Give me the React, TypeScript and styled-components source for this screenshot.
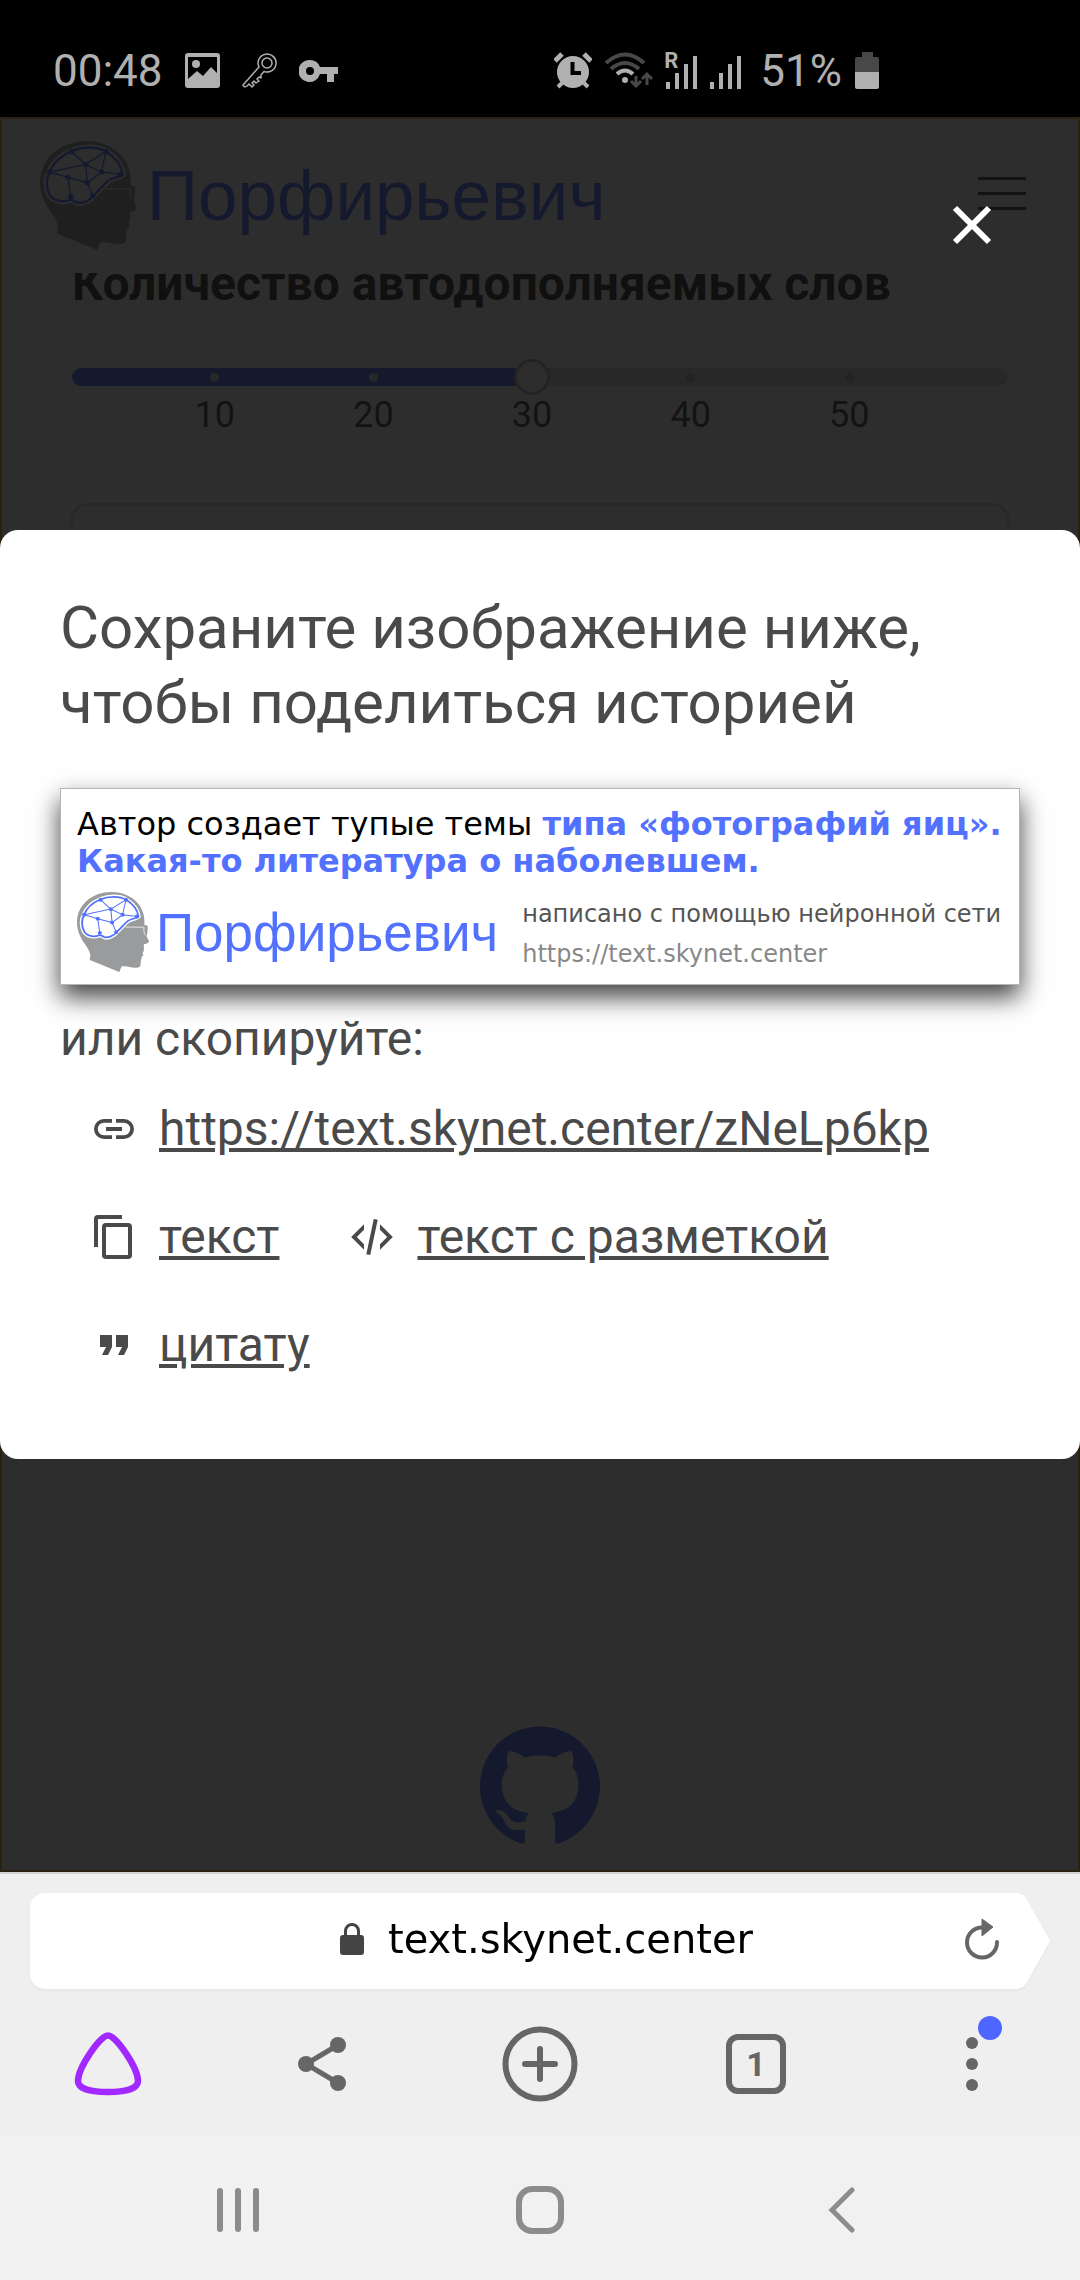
import React, { useState } from "react";
import styled, { createGlobalStyle } from "styled-components";

const roboto = `Roboto, "Noto Sans", sans-serif`;
const dejavu = `"DejaVu Sans", Verdana, sans-serif`;
const arial = `"Liberation Sans", Arial, sans-serif`;
const blue = "#5371ff";
const ink = "#4a4a4a";

const GlobalStyle = createGlobalStyle`
  *, *::before, *::after { box-sizing: border-box; }
  body { margin: 0; background: #f1f1f1; font-family: ${roboto}; color: ${ink}; }
  button { margin: 0; padding: 0; border: 0; background: none; color: inherit; font: inherit; cursor: pointer; }
  svg { display: block; flex: none; }
  h1, h2, p { margin: 0; }
`;

const Screen = styled.div`
  display: flex;
  flex-direction: column;
  min-height: 100vh;
`;

/* ---------- status bar ---------- */

const StatusBar = styled.header`
  display: flex;
  align-items: center;
  justify-content: space-between;
  height: 117px;
  padding: 24px 201px 0 53px;
  background: #000;
  color: #b0b0b0;
  font-size: 44px;
  line-height: 52px;
`;

const StatusGroup = styled.div<{ $gap: number }>`
  display: flex;
  align-items: center;
  gap: ${(p) => p.$gap}px;
`;

const Battery = styled(StatusGroup)`
  padding-left: 6px;
`;

/* ---------- site ---------- */

const Stage = styled.main`
  display: grid;
  flex: 1;
  grid-template: minmax(0, 1fr) / minmax(0, 1fr);
`;

const Page = styled.div`
  grid-area: 1 / 1;
  display: flex;
  flex-direction: column;
  border: 2px solid #eea74a;
  background: #fff;
`;

const SiteHeader = styled.div`
  display: flex;
  justify-content: space-between;
  align-items: flex-start;
  height: 154px;
  padding: 22px 52px 0 38px;
`;

const Brand = styled.span<{ $size: number; $gap: number }>`
  display: flex;
  align-items: center;
  gap: ${(p) => p.$gap}px;
  color: ${blue};
  font-family: ${arial};
  font-size: ${(p) => p.$size}px;
  line-height: 1;
`;

const Burger = styled.button`
  display: flex;
  flex-direction: column;
  gap: 12px;
  width: 48px;
  margin-top: 36px;
`;

const BurgerLine = styled.span`
  height: 3px;
  background: ${ink};
`;

const Settings = styled.section`
  display: flex;
  flex-direction: column;
  padding: 0 70px;
`;

const TitleWindow = styled.div`
  display: flex;
  flex-direction: column;
  justify-content: flex-end;
  height: 47px;
  overflow: hidden;
`;

const SectionTitle = styled.h2`
  color: #363636;
  font-size: 48px;
  font-weight: 700;
  line-height: 72px;
  white-space: nowrap;
`;

const SliderBox = styled.div`
  display: grid;
  grid-template-columns: minmax(0, 1fr);
  align-items: center;
  margin-top: 39px;
`;

const Track = styled.div<{ $filled: number }>`
  grid-area: 1 / 1;
  display: grid;
  grid-template-columns: 4fr repeat(5, 10fr) 5fr;
  align-items: center;
  height: 18px;
  border-radius: 9px;
  background: linear-gradient(to right, ${blue} ${(p) => p.$filled}%, #dbdbdb ${(p) => p.$filled}%);
`;

const Tick = styled.span<{ $column: number; $passed: boolean }>`
  grid-column: ${(p) => p.$column};
  justify-self: center;
  width: 9px;
  height: 9px;
  border-radius: 50%;
  background: ${(p) => (p.$passed ? "#dbdbdb" : "#b5b5b5")};
`;

const Range = styled.input`
  grid-area: 1 / 1;
  appearance: none;
  height: 36px;
  margin: 0 -18px;
  background: transparent;
  &::-webkit-slider-runnable-track { height: 36px; background: transparent; }
  &::-webkit-slider-thumb {
    appearance: none;
    width: 36px;
    height: 36px;
    border: 3px solid #b5b5b5;
    border-radius: 50%;
    background: #fff;
  }
`;

const Scale = styled.div`
  display: grid;
  grid-template-columns: 4fr repeat(5, 10fr) 5fr;
  margin-top: 2px;
  font-size: 36px;
  line-height: 36px;
`;

const ScaleLabel = styled.span<{ $column: number }>`
  grid-column: ${(p) => p.$column};
  text-align: center;
`;

const Story = styled.textarea`
  height: 600px;
  margin: 70px -2px 0;
  padding: 30px;
  border: 3px solid #dbdbdb;
  border-radius: 18px;
  background: #fff;
  resize: none;
`;

const SiteFooter = styled.footer`
  display: flex;
  justify-content: center;
  margin-top: auto;
  padding-bottom: 25px;
  a { color: ${blue}; }
`;

/* ---------- modal ---------- */

const Overlay = styled.div`
  grid-area: 1 / 1;
  z-index: 1;
  display: grid;
  grid-template: minmax(0, 1fr) / minmax(0, 1fr);
  background: rgba(10, 10, 10, 0.86);
`;

const CloseButton = styled.button`
  grid-area: 1 / 1;
  align-self: start;
  justify-self: end;
  display: grid;
  place-items: center;
  width: 96px;
  height: 96px;
  margin: 60px;
  color: #fff;
`;

const Dialog = styled.section`
  grid-area: 1 / 1;
  align-self: center;
  padding: 60px;
  border-radius: 18px;
  background: #fff;
`;

const DialogTitle = styled.h1`
  font-size: 60px;
  font-weight: 400;
  line-height: 75px;
`;

const Card = styled.figure`
  margin: 48px 0 18px;
  padding: 17px 16px 10px;
  border: 1px solid #b5b5b5;
  background: #fff;
  box-shadow: 0 12px 24px rgba(0, 0, 0, 0.75);
  font-family: ${dejavu};
`;

const Quote = styled.p`
  color: #000;
  font-size: 32px;
  line-height: 37px;
  b { color: ${blue}; }
`;

const CardFooter = styled.figcaption`
  display: flex;
  align-items: center;
  gap: 24px;
  margin-top: 10px;
`;

const Credits = styled.div`
  display: flex;
  flex-direction: column;
  padding-top: 4px;
  font-size: 24px;
  line-height: 40px;
  color: #555;
  white-space: nowrap;
`;

const CreditsUrl = styled.span`
  color: #888;
`;

const Lead = styled.p`
  font-size: 48px;
  line-height: 72px;
`;

const Actions = styled.div`
  display: flex;
  flex-wrap: wrap;
  column-gap: 69px;
  padding: 0 30px;
`;

const LineBreak = styled.span`
  flex-basis: 100%;
`;

const Action = styled.button`
  display: flex;
  align-items: center;
  gap: 21px;
  height: 108px;
  font-size: 48px;
  line-height: 72px;
  span { text-decoration: underline; }
`;

/* ---------- browser chrome ---------- */

const BrowserBar = styled.div`
  display: flex;
  flex-direction: column;
  gap: 3px;
  padding: 19px 30px 0;
  border-top: 2px solid #d6d4d2;
  background: #efefef;
`;

const AddressBar = styled.div`
  display: flex;
  height: 96px;
  filter: drop-shadow(0 2px 1px rgba(0, 0, 0, 0.03));
`;

const AddressBody = styled.div`
  display: grid;
  grid-template-columns: minmax(0, 1fr);
  flex: 1;
  align-items: center;
  border-radius: 15px 0 0 15px;
  background: #fff;
`;

const Address = styled.button`
  grid-area: 1 / 1;
  display: flex;
  justify-content: center;
  align-items: center;
  gap: 24px;
  height: 96px;
  padding: 0 0 4px 50px;
  color: #000;
  font-family: ${dejavu};
  font-size: 40px;
`;

const Reload = styled.button`
  grid-area: 1 / 1;
  justify-self: end;
  margin-right: 10px;
  color: #666;
`;

const Toolbar = styled.nav`
  display: grid;
  grid-template-columns: repeat(5, 1fr);
  height: 144px;
  margin: 0 -30px;
  color: #666;
`;

const Tool = styled.button`
  display: grid;
  place-items: center;
`;

const TabCount = styled.span`
  display: grid;
  place-items: center;
  width: 60px;
  height: 60px;
  border: 6px solid #666;
  border-radius: 12px;
  font-size: 34px;
  font-weight: 700;
  line-height: 34px;
`;

const SystemNav = styled.nav`
  display: grid;
  grid-template-columns: repeat(3, 1fr);
  height: 144px;
  padding: 4px 8% 0;
  background: #f1f1f1;
  color: #8c8c8c;
`;

/* ---------- drawings ---------- */

const nodes: [number, number][] = [
  [208, 454], [307, 454], [248, 492], [144, 515], [197, 531],
  [294, 515], [350, 522], [253, 547], [205, 589], [269, 586],
];

const brain =
  "M144 515C155 482 182 464 208 452C240 438 282 438 307 453C336 472 352 496 356 522C350 530 330 530 315 540C300 552 288 570 270 586C262 600 235 612 222 606C214 603 213 598 204 598C190 608 155 603 145 585C132 560 134 535 144 515Z";

function Head({ width, height }: { width: number; height: number }) {
  return (
    <svg width={width} height={height} viewBox="116 422 281 327" preserveAspectRatio="none" aria-hidden="true">
      <path
        fill="#999b9d"
        d="M250 422C325 422 379 475 379 540V558L386 557L388 560H392V573L388 605L397 622Q396 632 377 636V662L372 671L375 681L370 685C366 695 364 708 364 722Q361 732 342 732C325 731 305 723 290 727L281 749L166 700L168 678C162 650 144 637 130 606C120 585 116 566 116 543C118 470 180 422 250 422Z"
      />
      <path d={brain} fill="#fff" stroke="#fff" strokeWidth="18" strokeLinejoin="round" />
      <path d={brain} fill="none" stroke={blue} strokeWidth="7" />
      <path
        fill="none"
        stroke={blue}
        strokeWidth="4"
        d="M208 454L248 492L307 454L294 515L350 522M144 515L248 492L294 515L253 547L269 586M144 515L197 531L253 547L248 492M197 531L205 589"
      />
      {nodes.map(([x, y]) => (
        <circle key={`${x}-${y}`} cx={x} cy={y} r="8" fill={blue} />
      ))}
      <path fill="none" stroke="#fff" strokeWidth="3" d="M305 565L377 566M377 566V580Q378 595 384 600" />
    </svg>
  );
}

const icons = {
  link: "M3.9 12c0-1.71 1.39-3.1 3.1-3.1h4V7H7a5 5 0 0 0 0 10h4v-1.9H7c-1.71 0-3.1-1.39-3.1-3.1M8 13h8v-2H8v2m9-6h-4v1.9h4a3.1 3.1 0 0 1 0 6.2h-4V17h4a5 5 0 0 0 0-10Z",
  copy: "M19 21H8V7h11m0-2H8a2 2 0 0 0-2 2v14a2 2 0 0 0 2 2h11a2 2 0 0 0 2-2V7a2 2 0 0 0-2-2m-3-4H4a2 2 0 0 0-2 2v14h2V3h12V1Z",
  markup: "M12.89 3l1.96.4L11.11 21l-1.96-.4L12.89 3m6.7 9L16 8.41V5.58L22.42 12 16 18.41v-2.83L19.59 12M1.58 12 8 5.58v2.83L4.41 12 8 15.58v2.83L1.58 12Z",
  quote: "M14 17h3l2-4V7h-6v6h3M6 17h3l2-4V7H5v6h3l-2 4Z",
};

function ActionIcon({ name }: { name: keyof typeof icons }) {
  return (
    <svg width="48" height="48" viewBox="0 0 24 24" fill="currentColor" aria-hidden="true">
      <path d={icons[name]} />
    </svg>
  );
}

const PictureIcon = () => (
  <svg width="35" height="35" viewBox="0 0 35 35" fill="currentColor">
    <path fillRule="evenodd" d="M3 0h29a3 3 0 0 1 3 3v29a3 3 0 0 1-3 3H3a3 3 0 0 1-3-3V3a3 3 0 0 1 3-3Zm0 4v22l9-8 6 5 8-9 6 6V4Z" />
    <circle cx="11" cy="11" r="4" />
  </svg>
);

const KeyOutlineIcon = () => (
  <svg width="35" height="35" viewBox="0 0 35 35" fill="none" stroke="currentColor" strokeWidth="1.5" strokeLinejoin="round">
    <circle cx="25" cy="10" r="5" />
    <path d="M17 14a9 9 0 1 1 5 4.500L19 22v3l-2-1-2 2 2 2-3 2-2-2-2 2 2 2-2 2-3-3-2 2Q2 35 1 32Z" />
  </svg>
);

const KeyIcon = () => (
  <svg width="39" height="22" viewBox="0 0 39 22" fill="currentColor">
    <path fillRule="evenodd" d="M11 0a11 11 0 0 1 10 7h18v7h-4v8h-7v-8h-7A11 11 0 1 1 11 0Zm0 7a4 4 0 1 0 0 8 4 4 0 0 0 0-8Z" />
  </svg>
);

const AlarmIcon = () => (
  <svg width="38" height="37" viewBox="0 0 38 37">
    <path d="M1 9 8 2M37 9 30 2" stroke="currentColor" strokeWidth="5" />
    <path d="M8 31 4 35M30 31l4 4" stroke="currentColor" strokeWidth="4" />
    <circle cx="19" cy="20" r="16" fill="currentColor" />
    <path d="M18.500 10v11H27" fill="none" stroke="#000" strokeWidth="4" />
  </svg>
);

const WifiIcon = () => (
  <svg width="48" height="37" viewBox="0 0 48 37" fill="none" stroke="currentColor" strokeWidth="4">
    <g stroke="#484848">
      <path d="M1 11Q20-6 39 11M6 17Q20 5 34 17" />
      <path d="M31 24v9m-5-4 5 5 5-5M42 33v-9m-5 3 5-5 5 5" strokeWidth="3" />
    </g>
    <path d="M12 22Q20 15 28 22" />
    <circle cx="20" cy="28" r="3" fill="currentColor" stroke="none" />
  </svg>
);

const SignalGroup = styled.span`
  display: grid;
  align-items: end;
`;

const SignalBars = styled.svg`
  grid-area: 1 / 1;
`;

const Roaming = styled.span`
  grid-area: 1 / 1;
  align-self: start;
  margin-left: -2px;
  font-size: 22px;
  font-weight: 700;
  line-height: 18px;
`;

function Signal({ roaming }: { roaming?: boolean }) {
  return (
    <SignalGroup>
      <SignalBars width="31" height="37" viewBox="0 0 31 37">
        <path d="M2 30v7M11 21v16M20 12v25M29 4v33" stroke="currentColor" strokeWidth="4" />
      </SignalBars>
      {roaming && <Roaming>R</Roaming>}
    </SignalGroup>
  );
}

const BatteryIcon = () => (
  <svg width="24" height="37" viewBox="0 0 24 37">
    <path fill="#484848" d="M7 0h11v5h4a2 2 0 0 1 2 2v14H0V7a2 2 0 0 1 2-2h5Z" />
    <path fill="currentColor" d="M0 20h24v15a2 2 0 0 1-2 2H2a2 2 0 0 1-2-2Z" />
  </svg>
);

const marks = [10, 20, 30, 40, 50];
const rangeMin = 1;
const rangeMax = 60;

export default function App() {
  const [words, setWords] = useState(30);
  const filled = ((words - rangeMin) / (rangeMax - rangeMin)) * 100;

  return (
    <Screen>
      <GlobalStyle />
      <StatusBar>
        <StatusGroup $gap={22}>
          <span>00:48</span>
          <PictureIcon />
          <KeyOutlineIcon />
          <KeyIcon />
        </StatusGroup>
        <StatusGroup $gap={13}>
          <AlarmIcon />
          <WifiIcon />
          <Signal roaming />
          <Signal />
          <Battery $gap={13}>
            <span>51%</span>
            <BatteryIcon />
          </Battery>
        </StatusGroup>
      </StatusBar>

      <Stage>
        <Page>
          <SiteHeader>
            <Brand $size={71} $gap={10}>
              <Head width={97} height={109} />
              Порфирьевич
            </Brand>
            <Burger aria-label="Меню">
              <BurgerLine />
              <BurgerLine />
              <BurgerLine />
            </Burger>
          </SiteHeader>
          <Settings>
            <TitleWindow>
              <SectionTitle id="words-title">Количество автодополняемых слов</SectionTitle>
            </TitleWindow>
            <SliderBox>
              <Track $filled={filled}>
                {marks.map((mark, i) => (
                  <Tick key={mark} $column={i + 2} $passed={mark <= words} />
                ))}
              </Track>
              <Range
                type="range"
                aria-labelledby="words-title"
                min={rangeMin}
                max={rangeMax}
                value={words}
                onChange={(e) => setWords(Number(e.target.value))}
              />
            </SliderBox>
            <Scale>
              {marks.map((mark, i) => (
                <ScaleLabel key={mark} $column={i + 2}>{mark}</ScaleLabel>
              ))}
            </Scale>
            <Story aria-label="История" />
          </Settings>
          <SiteFooter>
            <a href="#github" aria-label="GitHub">
              <svg width="120" height="120" viewBox="0 0 16 16" fill="currentColor">
                <path d="M8 .2c-4.420 0-8 3.580-8 8 0 3.540 2.290 6.530 5.470 7.590.4.070.55-.17.55-.38 0-.19-.01-.82-.01-1.490-2.010.37-2.530-.49-2.690-.94-.09-.23-.48-.94-.82-1.130-.28-.15-.68-.52-.01-.53.63-.01 1.080.58 1.230.82.72 1.210 1.870.87 2.330.66.07-.52.28-.87.51-1.070-1.780-.2-3.640-.89-3.640-3.950 0-.87.31-1.590.82-2.150-.08-.2-.36-1.020.08-2.120 0 0 .67-.21 2.200.82.64-.18 1.320-.27 2-.27s1.360.09 2 .27c1.530-1.040 2.200-.82 2.200-.82.44 1.100.16 1.920.08 2.120.51.56.82 1.270.82 2.150 0 3.070-1.870 3.750-3.650 3.950.29.25.54.73.54 1.480 0 1.070-.01 1.930-.01 2.200 0 .21.15.46.55.38A8.010 8.010 0 0 0 16 8.200c0-4.420-3.580-8-8-8Z" />
              </svg>
            </a>
          </SiteFooter>
        </Page>

        <Overlay>
          <CloseButton aria-label="Закрыть">
            <svg width="48" height="48" viewBox="0 0 48 48" stroke="currentColor" strokeWidth="6">
              <path d="M7 7 41 41M41 7 7 41" />
            </svg>
          </CloseButton>
          <Dialog role="dialog" aria-labelledby="share-title">
            <DialogTitle id="share-title">Сохраните изображение ниже, чтобы поделиться историей</DialogTitle>
            <Card>
              <Quote>
                Автор создает тупые темы <b>типа «фотографий яиц». Какая-то литература о наболевшем.</b>
              </Quote>
              <CardFooter>
                <Brand $size={53} $gap={7}>
                  <Head width={72} height={80} />
                  Порфирьевич
                </Brand>
                <Credits>
                  <span>написано с помощью нейронной сети</span>
                  <CreditsUrl>https://text.skynet.center</CreditsUrl>
                </Credits>
              </CardFooter>
            </Card>
            <Lead>или скопируйте:</Lead>
            <Actions>
              <Action>
                <ActionIcon name="link" />
                <span>https://text.skynet.center/zNeLp6kp</span>
              </Action>
              <LineBreak />
              <Action>
                <ActionIcon name="copy" />
                <span>текст</span>
              </Action>
              <Action>
                <ActionIcon name="markup" />
                <span>текст с разметкой</span>
              </Action>
              <LineBreak />
              <Action>
                <ActionIcon name="quote" />
                <span>цитату</span>
              </Action>
            </Actions>
          </Dialog>
        </Overlay>
      </Stage>

      <BrowserBar>
        <AddressBar>
          <AddressBody>
            <Address>
              <svg width="24" height="32" viewBox="0 0 24 32">
                <path d="M5.500 14V8a6.500 6.500 0 0 1 13 0v6" fill="none" stroke="#444" strokeWidth="3" />
                <rect y="12" width="24" height="20" rx="3" fill="#444" />
              </svg>
              text.skynet.center
            </Address>
            <Reload aria-label="Обновить">
              <svg width="42" height="50" viewBox="0 0 42 50">
                <path d="M21 11.500A15 15 0 1 0 36 26" fill="none" stroke="currentColor" strokeWidth="4" strokeLinecap="round" />
                <path d="M21 3 32 11 21 20Z" fill="currentColor" stroke="currentColor" strokeWidth="1" strokeLinejoin="round" />
              </svg>
            </Reload>
          </AddressBody>
          <svg width="37" height="96" viewBox="0 0 37 96">
            <path fill="#fff" d="M0 0H3C8 0 12 3 14 7L37 48L14 89C12 93 8 96 3 96H0Z" />
          </svg>
        </AddressBar>
        <Toolbar>
          <Tool aria-label="Алиса">
            <svg width="68" height="66" viewBox="0 0 68 66">
              <path d="M34 4.500C42 4.500 64 37 64 50C64 58 50 61 34 61S4 58 4 50C4 37 26 4.500 34 4.500Z" fill="none" stroke="#a128ff" strokeWidth="6.500" />
            </svg>
          </Tool>
          <Tool aria-label="Поделиться">
            <svg width="56" height="56" viewBox="0 0 56 56" fill="currentColor">
              <path d="M42 9 10 28 42 47" fill="none" stroke="currentColor" strokeWidth="5" />
              <circle cx="42" cy="9" r="8" />
              <circle cx="10" cy="28" r="8" />
              <circle cx="42" cy="47" r="8" />
            </svg>
          </Tool>
          <Tool aria-label="Новая вкладка">
            <svg width="76" height="76" viewBox="0 0 76 76" fill="none" stroke="currentColor" strokeWidth="6">
              <circle cx="38" cy="38" r="34.500" />
              <path d="M38 23v30M23 38h30" strokeLinecap="round" />
            </svg>
          </Tool>
          <Tool aria-label="Вкладки">
            <TabCount>1</TabCount>
          </Tool>
          <Tool aria-label="Ещё">
            <svg width="60" height="96" viewBox="0 0 60 96" fill="currentColor">
              <circle cx="30" cy="27" r="6" />
              <circle cx="30" cy="48" r="6" />
              <circle cx="30" cy="69" r="6" />
              <circle cx="48" cy="12" r="12" fill="#4e66ff" />
            </svg>
          </Tool>
        </Toolbar>
      </BrowserBar>

      <SystemNav>
        <Tool aria-label="Недавние">
          <svg width="44" height="46" viewBox="0 0 44 46" stroke="currentColor" strokeWidth="6" strokeLinecap="round">
            <path d="M4 4v38M22 4v38M40 4v38" />
          </svg>
        </Tool>
        <Tool aria-label="Домой">
          <svg width="48" height="48" viewBox="0 0 48 48" fill="none" stroke="currentColor" strokeWidth="6">
            <rect x="3" y="3" width="42" height="42" rx="13" />
          </svg>
        </Tool>
        <Tool aria-label="Назад">
          <svg width="28" height="46" viewBox="0 0 28 46" fill="none" stroke="currentColor" strokeWidth="5" strokeLinecap="round">
            <path d="M24 3 4 23 24 43" />
          </svg>
        </Tool>
      </SystemNav>
    </Screen>
  );
}
